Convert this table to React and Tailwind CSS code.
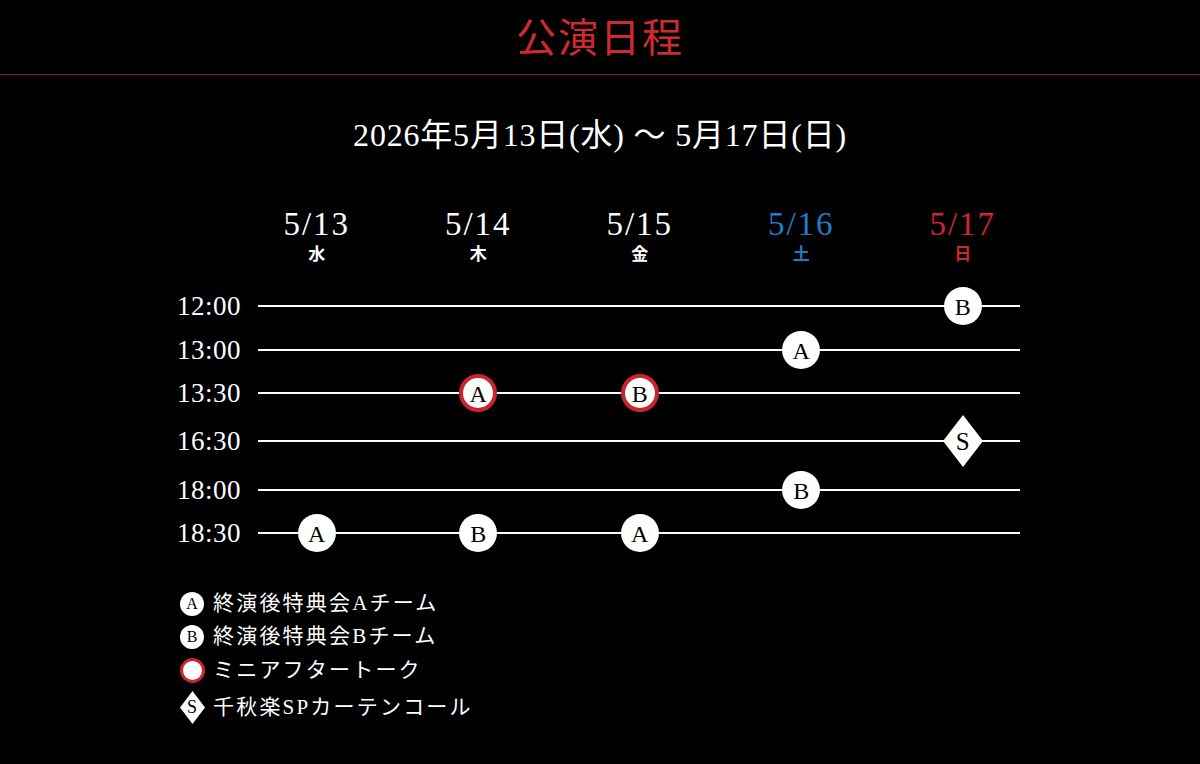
import React from 'react';

const serif = { fontFamily: '"Liberation Serif", "Noto Sans CJK JP", serif' };

const days = [
  { date: '5/13', wd: '水', color: 'text-white' },
  { date: '5/14', wd: '木', color: 'text-white' },
  { date: '5/15', wd: '金', color: 'text-white' },
  { date: '5/16', wd: '土', color: 'text-[#1d7dc9]' },
  { date: '5/17', wd: '日', color: 'text-[#d0262f]' },
];

// each slot: [A|B|RA|RB|S|null] per day
const rows = [
  { time: '12:00', h: 'h-[44px]', slots: [null, null, null, null, 'B'] },
  { time: '13:00', h: 'h-[44px]', slots: [null, null, null, 'A', null] },
  { time: '13:30', h: 'h-[42px]', slots: [null, 'RA', 'RB', null, null] },
  { time: '16:30', h: 'h-[54px]', slots: [null, null, null, null, 'S'] },
  { time: '18:00', h: 'h-[44px]', slots: [null, null, null, 'B', null] },
  { time: '18:30', h: 'h-[42px]', slots: ['A', 'B', 'A', null, null] },
];

const Mark = ({ kind }) => {
  if (!kind) return null;
  if (kind === 'S') {
    return (
      <div className="relative w-[40px] h-[52px] flex items-center justify-center">
        <svg width="40" height="52" viewBox="0 0 40 52" className="absolute inset-0">
          <polygon points="20,0 40,26 20,52 0,26" fill="#fff" />
        </svg>
        <span className="relative text-black text-[25px] leading-none pt-[1px]">S</span>
      </div>
    );
  }
  const red = kind.startsWith('R');
  const letter = red ? kind.slice(1) : kind;
  return (
    <div
      className={`relative z-10 w-[38px] h-[38px] rounded-full bg-white flex items-center justify-center text-black text-[24px] leading-none ${
        red ? 'border-[4px] border-[#c8252d]' : ''
      }`}
    >
      <span className="pt-[1px]">{letter}</span>
    </div>
  );
};

const LegendIcon = ({ kind }) => {
  if (kind === 'S') {
    return (
      <div className="relative w-[25px] h-[33px] flex items-center justify-center">
        <svg width="25" height="33" viewBox="0 0 25 33" className="absolute inset-0">
          <polygon points="12.5,0 25,16.5 12.5,33 0,16.5" fill="#fff" />
        </svg>
        <span className="relative text-black text-[18px] leading-none">S</span>
      </div>
    );
  }
  if (kind === 'R') {
    return <div className="w-[25px] h-[25px] rounded-full bg-white border-[3px] border-[#c8252d]" />;
  }
  return (
    <div className="w-[24px] h-[24px] rounded-full bg-white flex items-center justify-center text-black text-[16px] leading-none">
      {kind}
    </div>
  );
};

const legend = [
  { kind: 'A', label: '終演後特典会Aチーム', h: 'h-[33px]' },
  { kind: 'B', label: '終演後特典会Bチーム', h: 'h-[33px]' },
  { kind: 'R', label: 'ミニアフタートーク', h: 'h-[34px]' },
  { kind: 'S', label: '千秋楽SPカーテンコール', h: 'h-[40px]' },
];

export default function App() {
  return (
    <div className="w-[1200px] h-[764px] bg-black text-white overflow-hidden" style={serif}>
      <div className="h-[75px] border-b border-[#8e1c22] flex items-center justify-center">
        <h1 className="text-[40px] leading-none text-[#cf2a30] tracking-[2px] pt-[4px]">公演日程</h1>
      </div>

      <div className="mt-[44px] text-center text-[32px] leading-none tracking-[0.8px]">
        2026年5月13日(水) ～ 5月17日(日)
      </div>

      <div className="mt-[57px] ml-[236px] grid grid-cols-[repeat(5,161.5px)]">
        {days.map((d) => (
          <div key={d.date} className={`flex flex-col items-center ${d.color}`}>
            <div className="text-[33px] leading-none tracking-[2px]">{d.date}</div>
            <div className="mt-[5px] text-[17px] leading-none font-bold">{d.wd}</div>
          </div>
        ))}
      </div>

      <div className="mt-[21px]">
        {rows.map((r) => (
          <div key={r.time} className={`flex items-center ${r.h}`}>
            <div className="w-[241px] text-right text-[27px] leading-none tracking-[0.5px]">{r.time}</div>
            <div className="relative ml-[-5px] grid grid-cols-[repeat(5,161.5px)] items-center">
              <div className="absolute left-[22px] w-[762px] top-1/2 h-[2px] -translate-y-1/2 bg-white" />
              {r.slots.map((s, i) => (
                <div key={i} className="relative flex justify-center items-center h-[40px]">
                  <Mark kind={s} />
                </div>
              ))}
            </div>
          </div>
        ))}
      </div>

      <div className="mt-[33px] ml-[179px]">
        {legend.map((l) => (
          <div key={l.label} className={`flex items-center ${l.h}`}>
            <div className="w-[26px] flex justify-center">
              <LegendIcon kind={l.kind} />
            </div>
            <div className="ml-[8px] text-[21px] leading-none tracking-[2.2px]">{l.label}</div>
          </div>
        ))}
      </div>
    </div>
  );
}
